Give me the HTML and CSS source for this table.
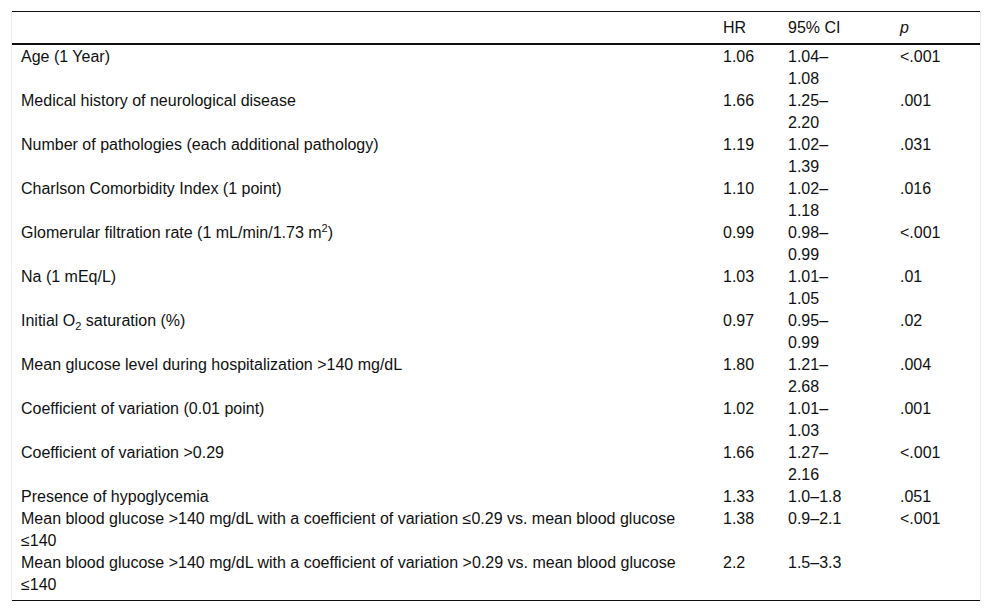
FILE: index.html
```html
<!DOCTYPE html>
<html lang="en">
<head>
<meta charset="utf-8">
<title>Table</title>
<link rel="stylesheet" href="styles.css">
</head>
<body>
<div class="frame">
<table class="data">
<thead>
<tr>
<th class="c-label"></th>
<th class="c-hr">HR</th>
<th class="c-ci">95% CI</th>
<th class="c-p"><i>p</i></th>
</tr>
</thead>
<tbody>
<tr><td>Age (1 Year)</td><td>1.06</td><td class="ci">1.04–1.08</td><td>&lt;.001</td></tr>
<tr><td>Medical history of neurological disease</td><td>1.66</td><td class="ci">1.25–2.20</td><td>.001</td></tr>
<tr><td>Number of pathologies (each additional pathology)</td><td>1.19</td><td class="ci">1.02–1.39</td><td>.031</td></tr>
<tr><td>Charlson Comorbidity Index (1 point)</td><td>1.10</td><td class="ci">1.02–1.18</td><td>.016</td></tr>
<tr><td>Glomerular filtration rate (1 mL/min/1.73 m<sup>2</sup>)</td><td>0.99</td><td class="ci">0.98–0.99</td><td>&lt;.001</td></tr>
<tr><td>Na (1 mEq/L)</td><td>1.03</td><td class="ci">1.01–1.05</td><td>.01</td></tr>
<tr><td>Initial O<sub>2</sub> saturation (%)</td><td>0.97</td><td class="ci">0.95–0.99</td><td>.02</td></tr>
<tr><td>Mean glucose level during hospitalization &gt;140 mg/dL</td><td>1.80</td><td class="ci">1.21–2.68</td><td>.004</td></tr>
<tr><td>Coefficient of variation (0.01 point)</td><td>1.02</td><td class="ci">1.01–1.03</td><td>.001</td></tr>
<tr><td>Coefficient of variation &gt;0.29</td><td>1.66</td><td class="ci">1.27–2.16</td><td>&lt;.001</td></tr>
<tr><td>Presence of hypoglycemia</td><td>1.33</td><td class="ci">1.0–1.8</td><td>.051</td></tr>
<tr><td>Mean blood glucose &gt;140 mg/dL with a coefficient of variation ≤0.29 vs. mean blood glucose ≤140</td><td>1.38</td><td class="ci">0.9–2.1</td><td>&lt;.001</td></tr>
<tr class="last"><td>Mean blood glucose &gt;140 mg/dL with a coefficient of variation &gt;0.29 vs. mean blood glucose ≤140</td><td>2.2</td><td class="ci">1.5–3.3</td><td></td></tr>
</tbody>
</table>
</div>
</body>
</html>
```
FILE: styles.css
```css
html, body {
  margin: 0;
  padding: 0;
  background: #fff;
}

body {
  font-family: "Liberation Sans", Arial, sans-serif;
  font-size: 16px;
  color: #111;
}

.frame {
  margin: 11px 11px 0 11px;
  width: 970px;
  box-sizing: border-box;
  border-left: 1px solid #ececec;
  border-right: 1px solid #ececec;
}

.data {
  width: 100%;
  border-collapse: collapse;
  table-layout: fixed;
}

.data th,
.data td {
  box-sizing: border-box;
  text-align: left;
  vertical-align: top;
  line-height: 22px;
  padding: 0 10px 0 10px;
  font-weight: normal;
}

.data th:first-child,
.data td:first-child {
  padding-left: 9px;
}

.data thead tr {
  border-top: 1px solid #111;
  border-bottom: 2px solid #111;
}

.data th {
  padding-top: 5px;
  padding-bottom: 4px;
}

.data tbody tr:first-child td {
  padding-top: 1px;
}

.c-label { width: 701px; }
.c-hr { width: 65px; }
.c-ci { width: 112px; }
.c-p { width: auto; }

.data td.ci {
  padding-right: 48px;
}

.data tr.last {
  border-bottom: 1px solid #111;
}

.data tr.last td {
  padding-bottom: 4px;
}

sup, sub {
  font-size: 11px;
  line-height: 0;
}
```
